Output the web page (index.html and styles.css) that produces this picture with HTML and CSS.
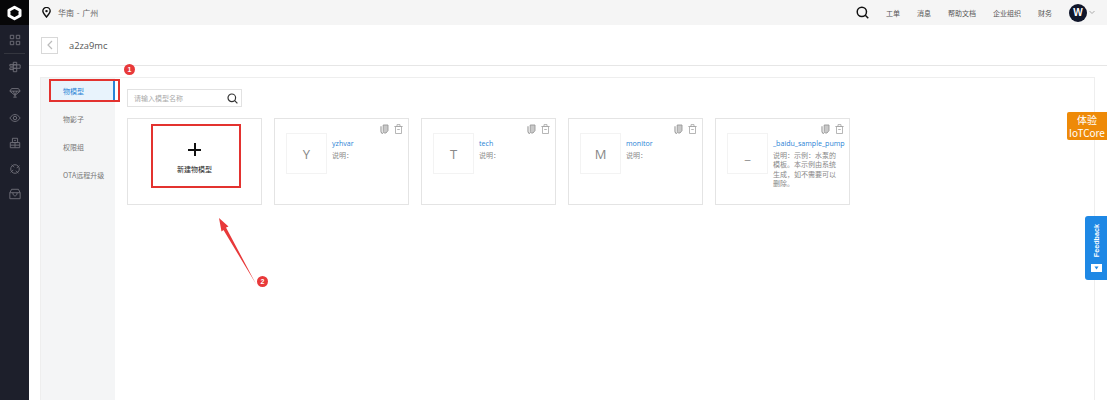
FILE: index.html
```html
<!DOCTYPE html>
<html lang="zh">
<head>
<meta charset="utf-8">
<title>a2za9mc</title>
<link rel="stylesheet" href="styles.css">
</head>
<body>
<svg class="defs" width="0" height="0">
  <symbol id="i-copy" viewBox="0 0 9 10"><path d="M3.200 1h4.800v5.600L6 9H4.700a1.500 1.500 0 0 1-1.500-1.500z" fill="#c9c9c9" stroke="#999" stroke-width=".9"/><path d="M1 2.300V7.500C1 8.600 1.800 9.300 3 9.400" fill="none" stroke="#999" stroke-width="1.100"/></symbol>
  <symbol id="i-trash" viewBox="0 0 9 10"><path d="M1.500 2.500h6v7h-6zM.3 2.500h8.400M3 2.500V.6h3v1.900M3.200 5.500h2.600" fill="none" stroke="#a5a5a5" stroke-width=".8"/></symbol>
</svg>
<div class="app">
  <aside class="rail">
    <div class="logo">
      <svg width="15" height="16" viewBox="0 0 15 16"><path d="M7.500 2.200 13 5.300v5.400l-5.500 3.100L2 10.700V5.300z" fill="none" stroke="#fff" stroke-width="3" stroke-linejoin="round"/></svg>
    </div>
    <nav class="rail-icons">
      <svg class="ri ri-first" viewBox="0 0 14 14"><path d="M1.500 1.500h4v4h-4zM8.500 1.500h4v4h-4zM1.500 8.500h4v4h-4zM8.500 8.500h4v4h-4z"/></svg>
      <div class="rail-sep"></div>
      <svg class="ri" viewBox="0 0 14 14"><path d="M5 1.500h4v3H5zM5 4.500h8v4H5zM5 8.500h4v4H5zM1 4h4v2H1zM1 8h4v2H1zM9 4.500v4"/></svg>
      <svg class="ri" viewBox="0 0 14 14"><path d="M3 3h8l2 3-6 5-6-5zM1 6h12M5 6l2 5 2-5M7 11v2M5 13h4"/></svg>
      <svg class="ri" viewBox="0 0 14 14"><path d="M1 7c2-3 4-4 6-4s4 1 6 4c-2 3-4 4-6 4s-4-1-6-4z"/><circle cx="7" cy="7" r="2"/></svg>
      <svg class="ri" viewBox="0 0 14 14"><path d="M4 1.500h6v5H4zM1.500 6.500h11v6h-11zM7 6.500v6M1.500 9.500h11M6 4h2"/></svg>
      <svg class="ri" viewBox="0 0 14 14"><circle cx="7" cy="7" r="5"/><path d="M3 2l3 3M11 12 8 9M12 3 9 6M2 11l3-3"/></svg>
      <svg class="ri" viewBox="0 0 14 14"><path d="M3 1.500h8l2 4v7H1v-7zM1 5.500h12M4.500 5.500c0 5 5 5 5 0"/></svg>
    </nav>
  </aside>
  <div class="main">
    <header class="topbar">
      <div class="region">
        <svg width="9" height="11" viewBox="0 0 11 13"><path d="M5.500 12C3 9 1 7 1 4.800a4.500 4.500 0 0 1 9 0C10 7 8 9 5.500 12z" fill="none" stroke="#111" stroke-width="1.700"/><circle cx="5.500" cy="4.800" r="1.500" fill="#111"/></svg>
        <span>华南 - 广州</span>
      </div>
      <div class="top-right">
        <svg class="top-search" width="13" height="13" viewBox="0 0 14 14"><circle cx="6.300" cy="6.300" r="5" fill="none" stroke="#111" stroke-width="1.600"/><path d="m10 10 3.200 3.200" stroke="#111" stroke-width="1.600"/></svg>
        <a class="tl">工单</a>
        <a class="tl">消息</a>
        <a class="tl">帮助文档</a>
        <a class="tl">企业组织</a>
        <a class="tl">财务</a>
        <span class="avatar">W</span>
        <svg class="caret" width="6" height="5" viewBox="0 0 6 5"><path d="m.5 1 2.500 2.500L5.500 1" fill="none" stroke="#aaa"/></svg>
      </div>
    </header>
    <div class="titlebar">
      <button class="back"><svg width="6" height="10" viewBox="0 0 6 10"><path d="M5 1 1 5l4 4" fill="none" stroke="#bbb" stroke-width="1.200"/></svg></button>
      <span class="title">a2za9mc</span>
    </div>
    <div class="content">
      <div class="panel">
        <ul class="tabs">
          <li class="tab active">物模型</li>
          <li class="tab">物影子</li>
          <li class="tab">权限组</li>
          <li class="tab">OTA远程升级</li>
        </ul>
        <div class="body">
          <div class="search">
            <span>请输入模型名称</span>
            <svg width="11" height="11" viewBox="0 0 11 11"><circle cx="4.800" cy="4.800" r="3.800" fill="none" stroke="#333" stroke-width="1.200"/><path d="m7.700 7.700 2.700 2.700" stroke="#333" stroke-width="1.200"/></svg>
          </div>
          <div class="cards">
            <div class="card new-card">
              <div class="plus"></div>
              <div class="new-label">新建物模型</div>
            </div>
            <div class="card">
              <div class="actions"><svg><use href="#i-copy"/></svg><svg><use href="#i-trash"/></svg></div>
              <div class="thumb">Y</div>
              <div class="info"><div class="name">yzhvar</div><div class="desc">说明：</div></div>
            </div>
            <div class="card">
              <div class="actions"><svg><use href="#i-copy"/></svg><svg><use href="#i-trash"/></svg></div>
              <div class="thumb">T</div>
              <div class="info"><div class="name">tech</div><div class="desc">说明：</div></div>
            </div>
            <div class="card">
              <div class="actions"><svg><use href="#i-copy"/></svg><svg><use href="#i-trash"/></svg></div>
              <div class="thumb">M</div>
              <div class="info"><div class="name">monitor</div><div class="desc">说明：</div></div>
            </div>
            <div class="card">
              <div class="actions"><svg><use href="#i-copy"/></svg><svg><use href="#i-trash"/></svg></div>
              <div class="thumb">_</div>
              <div class="info"><div class="name">_baidu_sample_pump</div><div class="desc">说明：示例：水泵的模板。本示例由系统生成，如不需要可以删除。</div></div>
            </div>
          </div>
        </div>
      </div>
    </div>
  </div>
</div>

<div class="mark mark-tab"></div>
<div class="mark mark-new"></div>
<span class="badge badge-1">1</span>
<span class="badge badge-2">2</span>
<svg class="arrow" width="50" height="80" viewBox="0 0 50 80"><path d="M1 1 10.500 9.500 8 10.500 38 67 5.500 13 3.500 14.500z" fill="#e8393a"/></svg>

<div class="float-orange">体验<br>IoTCore</div>
<div class="float-blue">
  <span class="fb-text">Feedback</span>
  <svg width="11" height="8" viewBox="0 0 11 8"><path d="M0 0h11v8H0z" fill="#fff"/><path d="M3.500 2.500 5.500 5.500l2-3z" fill="#1e88e5"/></svg>
</div>
</body>
</html>
```

FILE: styles.css
```css
* { box-sizing: border-box; }
html, body { margin: 0; height: 100%; overflow: hidden; background: #fff; }
body { font-family: "Noto Sans CJK SC", "Open Sans", "Noto Sans", sans-serif; font-size: 7px; color: #555; }
.defs { position: absolute; }
.app { display: flex; height: 400px; }

.rail { width: 29px; flex: none; background: #1d1f2b; display: flex; flex-direction: column; }
.logo { height: 25px; background: #070708; display: flex; align-items: center; justify-content: center; }
.rail-icons { display: flex; flex-direction: column; align-items: center; padding-top: 9px; }
.ri { display: block; width: 12px; height: 12px; margin-bottom: 13.400px; fill: none; stroke: #6e6f78; stroke-width: 1.100; }
.ri-first { margin-bottom: 7px; }
.rail-sep { width: 21px; height: 1px; background: #34363f; margin-bottom: 7px; }

.main { flex: 1; min-width: 0; display: flex; flex-direction: column; }
.topbar { height: 25px; flex: none; background: #f5f5f5; display: flex; align-items: center; justify-content: space-between; padding: 0 12px; }
.region { display: flex; align-items: center; gap: 7px; margin-left: 1px; font-size: 8px; word-spacing: 1px; color: #666; }
.top-right { display: flex; align-items: center; gap: 17px; }
.top-search { display: block; }
.tl { font-size: 7px; color: #555; white-space: nowrap; }
.avatar { width: 18px; height: 18px; border-radius: 50%; background: #10162a; color: #fff; font-family: "Liberation Sans", sans-serif; font-weight: 700; font-size: 10px; display: flex; align-items: center; justify-content: center; }
.caret { margin-left: -15px; }

.titlebar { height: 41px; flex: none; display: flex; align-items: center; padding-left: 12px; gap: 11px; border-bottom: 1px solid #e6e6e6; }
.back { width: 17px; height: 17px; padding: 0; background: #fff; border: 1px solid #d8d8d8; display: flex; align-items: center; justify-content: center; }
.title { font-family: "Open Sans", sans-serif; font-size: 9.300px; color: #555; }

.content { flex: 1; padding: 11px 12px 0 11px; min-height: 0; }
.panel { height: 100%; display: flex; border: 1px solid #eeeeee; border-bottom: 0; }
.tabs { width: 74px; flex: none; margin: 0; padding: 1px 0 0; list-style: none; background: #f4f5f6; }
.tab { height: 28px; line-height: 28px; padding-left: 22px; color: #777; white-space: nowrap; }
.tab.active { height: 22px; line-height: 25px; margin: 0 0 4px 8px; padding-left: 14px; background: #e8f3fc; color: #2b84d6; border-right: 2px solid #2b84d6; }
.body { flex: 1; padding: 11px 0 0 12px; }
.search { width: 115px; height: 18px; border: 1px solid #e2e2e2; display: flex; align-items: center; justify-content: space-between; padding: 0 3px 0 6px; color: #aaa; }
.cards { display: flex; gap: 12px; margin-top: 11px; }
.card { width: 135px; height: 87px; border: 1px solid #e4e4e4; position: relative; display: flex; padding: 14px 0 0 11px; gap: 5px; background: #fff; }
.new-card { flex-direction: column; align-items: center; padding: 24px 0 0; gap: 8px; }
.plus { width: 13px; height: 13px; background: linear-gradient(#111,#111) center/13px 2px no-repeat, linear-gradient(#111,#111) center/2px 13px no-repeat; }
.new-label { color: #222; }
.actions { position: absolute; top: 5px; right: 5px; display: flex; gap: 5px; }
.actions svg { width: 9px; height: 10px; display: block; }
.thumb { width: 41px; height: 41px; flex: none; border: 1px solid #f3f3f3; display: flex; align-items: center; justify-content: center; font-family: "Open Sans", sans-serif; font-size: 13px; color: #888; }
.info { flex: 1; min-width: 0; padding: 5px 12px 0 0; }
.name { font-family: "Open Sans", sans-serif; font-size: 7.100px; line-height: 11px; color: #2b84d6; white-space: nowrap; }
.desc { line-height: 9.400px; margin-top: 2px; color: #888; }

.mark { position: absolute; border: 2px solid #e3322f; }
.mark-tab { left: 49px; top: 79px; width: 71px; height: 23px; }
.mark-new { left: 151px; top: 124px; width: 89.500px; height: 64px; }
.badge { position: absolute; width: 11px; height: 11px; border-radius: 50%; background: #e8393a; color: #fff; font-family: "Liberation Sans", sans-serif; font-size: 7px; font-weight: 700; display: flex; align-items: center; justify-content: center; }
.badge-1 { left: 124px; top: 64px; }
.badge-2 { left: 257px; top: 276px; }
.arrow { position: absolute; left: 218px; top: 217px; }

.float-orange { position: absolute; left: 1067px; top: 112px; width: 40px; height: 28px; background: #ee8a08; color: #fff; font-size: 10px; line-height: 13px; text-align: center; padding-top: 1px; border-radius: 2px 0 0 2px; }
.float-blue { position: absolute; left: 1085px; top: 216px; width: 22px; height: 64px; background: #1e88e5; border-radius: 3px 0 0 3px; display: flex; flex-direction: column; align-items: center; justify-content: flex-end; padding-bottom: 8px; gap: 7px; color: #fff; }
.fb-text { writing-mode: vertical-rl; transform: rotate(180deg); font-family: "Liberation Sans", sans-serif; font-size: 7.200px; font-weight: 700; }
```
